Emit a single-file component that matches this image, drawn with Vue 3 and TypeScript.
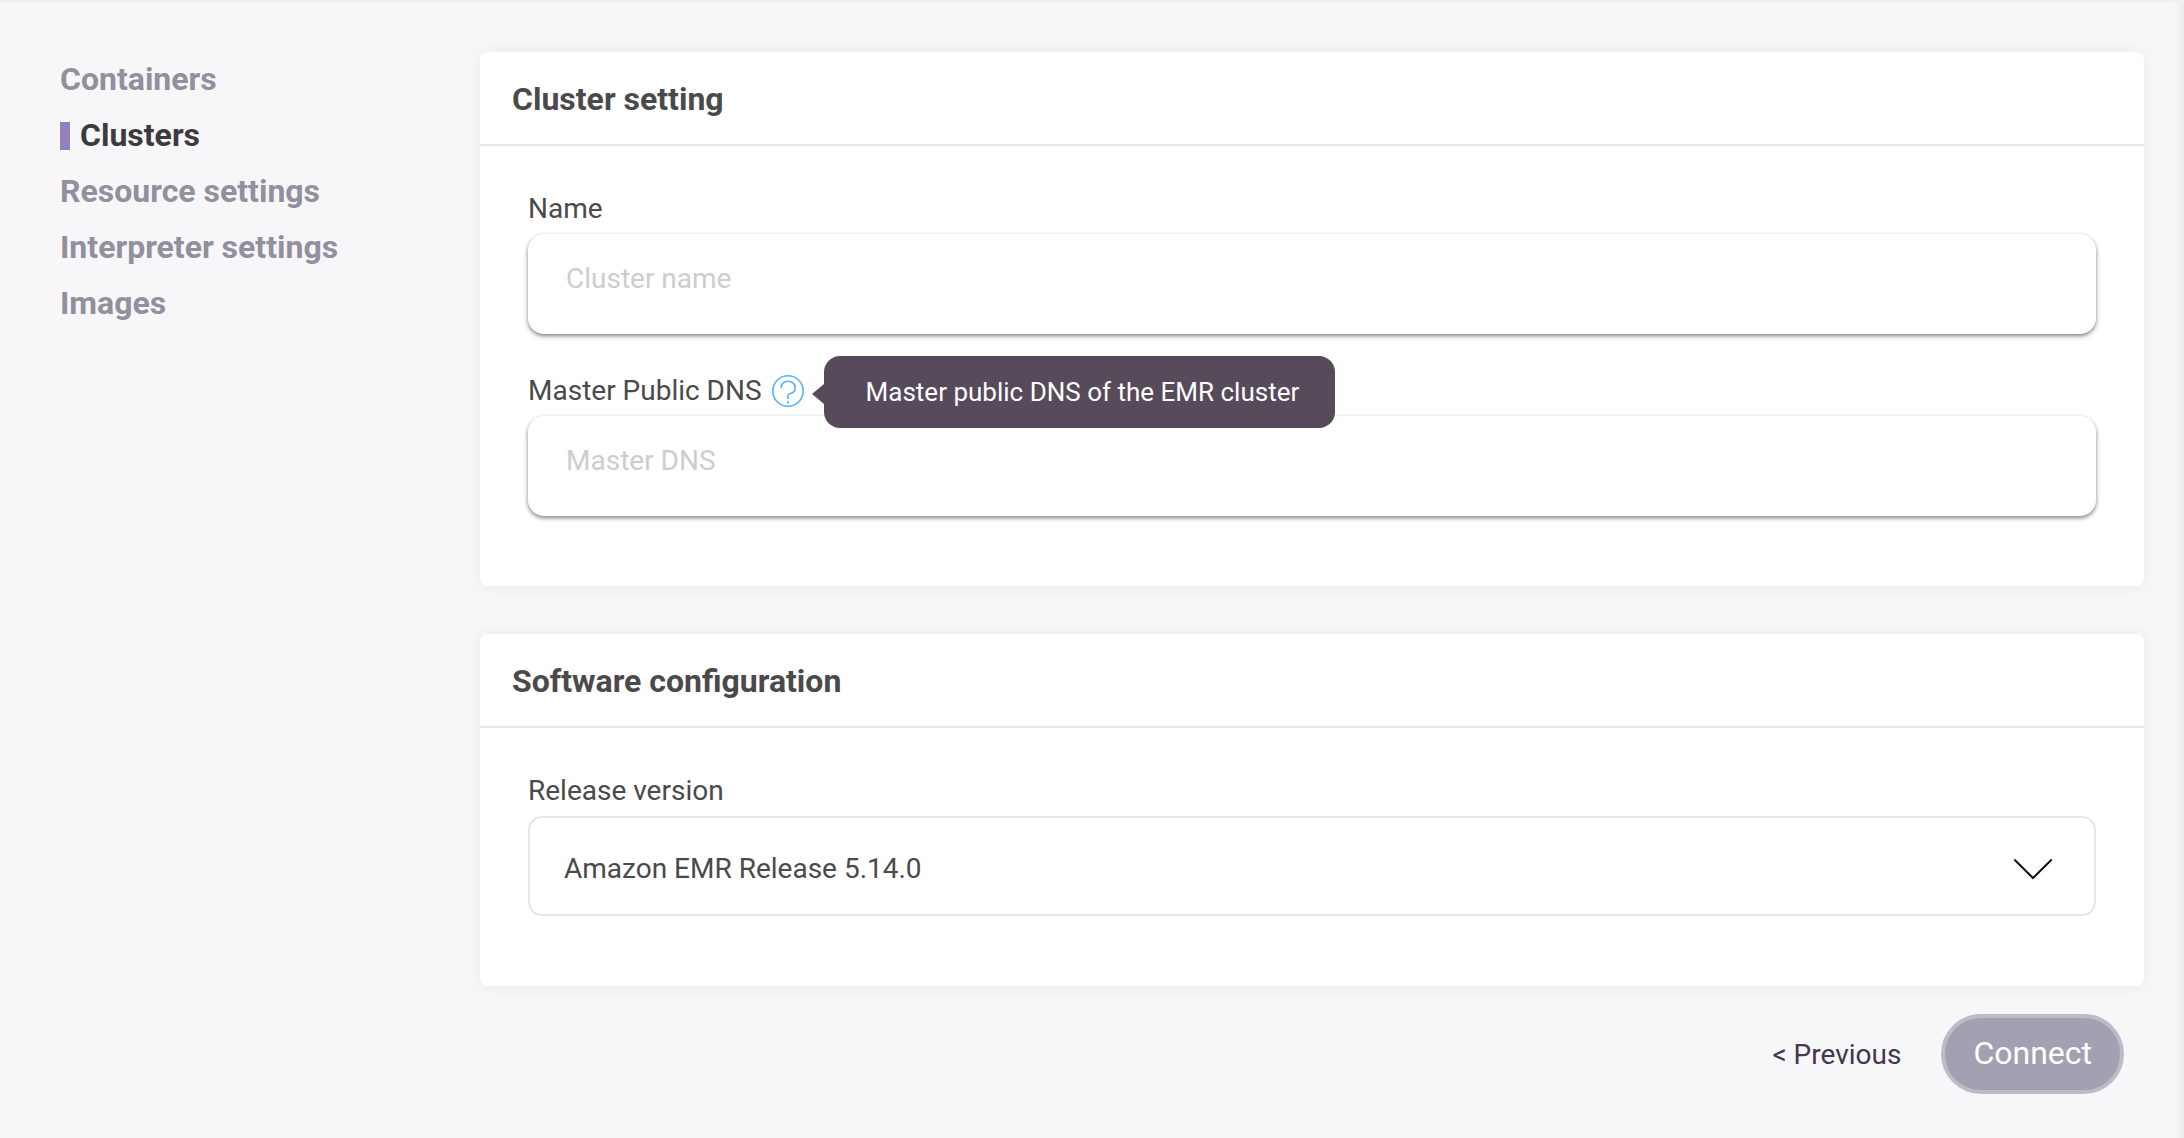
<script setup lang="ts">
import { ref } from 'vue'

interface NavItem {
  label: string
  slug: string
}

const navItems: NavItem[] = [
  { label: 'Containers', slug: 'containers' },
  { label: 'Clusters', slug: 'clusters' },
  { label: 'Resource settings', slug: 'resource-settings' },
  { label: 'Interpreter settings', slug: 'interpreter-settings' },
  { label: 'Images', slug: 'images' },
]
const activeSlug = ref('clusters')

const clusterName = ref('')
const masterDns = ref('')
const releases: string[] = ['Amazon EMR Release 5.14.0']
const release = ref(releases[0])
</script>

<template>
  <div class="page">
    <nav class="sidebar" aria-label="Settings">
      <ul class="nav-list">
        <li v-for="item in navItems" :key="item.slug">
          <a
            class="nav-link"
            :class="{ active: item.slug === activeSlug }"
            :href="'#' + item.slug"
            @click="activeSlug = item.slug"
          >{{ item.label }}</a>
        </li>
      </ul>
    </nav>

    <form class="content" @submit.prevent>
      <section class="card">
        <h2 class="card-title">Cluster setting</h2>
        <div class="card-body">
          <div class="field">
            <div class="label-row">
              <label for="cluster-name">Name</label>
            </div>
            <input id="cluster-name" v-model="clusterName" class="text-input" type="text" placeholder="Cluster name">
          </div>
          <div class="field">
            <div class="label-row">
              <label for="master-dns">Master Public DNS</label>
              <span class="help">
                <button class="help-button" type="button" aria-label="Help" aria-describedby="dns-tip">
                  <svg viewBox="0 0 32 32" width="32" height="32" fill="none" stroke="#58b0fa" stroke-width="1.6">
                    <circle cx="16" cy="16" r="15.2" />
                    <path d="M9.2 13.2V12.4C9.2 8.8 12.2 6.2 16 6.2S23.2 8.8 23.2 12.4C23.2 15.6 21 17.9 18.2 18.5C16.8 18.8 16 19.3 16 20.6V24" />
                    <path d="M16 25.8V28.8" />
                  </svg>
                </button>
                <span id="dns-tip" class="tooltip" role="tooltip">Master public DNS of the EMR cluster</span>
              </span>
            </div>
            <input id="master-dns" v-model="masterDns" class="text-input" type="text" placeholder="Master DNS">
          </div>
        </div>
      </section>

      <section class="card">
        <h2 class="card-title">Software configuration</h2>
        <div class="card-body">
          <div class="field">
            <div class="label-row">
              <label for="release">Release version</label>
            </div>
            <div class="select-wrap">
              <select id="release" v-model="release" class="select">
                <option v-for="name in releases" :key="name" :value="name">{{ name }}</option>
              </select>
              <svg class="chevron" viewBox="0 0 40 22" width="40" height="22" fill="none" stroke="#111" stroke-width="2" aria-hidden="true">
                <path d="M1.3 1.5L20 20L38.7 1.5" />
              </svg>
            </div>
          </div>
        </div>
      </section>

      <div class="actions">
        <button class="previous" type="button">&lt; Previous</button>
        <button class="connect" type="submit">Connect</button>
      </div>
    </form>
  </div>
</template>

<style>
body {
  margin: 0;
  background: #f7f7fa;
}
</style>

<style scoped>
.page {
  box-sizing: border-box;
  display: grid;
  grid-template-columns: 420px minmax(0, 1fr);
  min-height: 100vh;
  padding: 50px 40px 44px 60px;
  border-top: 2px solid #f0f0f3;
  background: linear-gradient(to left, #ededef, #f7f7fa 10px);
  color: #4a4a4a;
  font-family: Roboto, sans-serif;
  font-size: 28px;
  line-height: 38px;
}

.page *,
.page *::before,
.page *::after {
  box-sizing: border-box;
}

.nav-list {
  margin: 0;
  padding: 0;
  list-style: none;
}

.nav-link {
  display: flex;
  align-items: center;
  gap: 10px;
  padding-bottom: 2px;
  color: #91909c;
  font-size: 32px;
  font-weight: 700;
  line-height: 54px;
  text-decoration: none;
}

.nav-link.active {
  color: #3b3b3d;
}

.nav-link.active::before {
  width: 10px;
  height: 28px;
  margin-top: 2px;
  background: #9580bb;
  content: '';
}

.content {
  display: flex;
  flex-direction: column;
}

.card {
  margin-bottom: 48px;
  border-radius: 8px;
  background: #fff;
  box-shadow: 0 0 16px rgba(0, 0, 0, 0.06);
}

.card:last-of-type {
  margin-bottom: 28px;
}

.card-title {
  margin: 0;
  padding: 2px 32px 0;
  border-bottom: 2px solid #e7e6ed;
  font-size: 32px;
  font-weight: 700;
  line-height: 90px;
}

.card-body {
  display: flex;
  flex-direction: column;
  gap: 38px;
  padding: 44px 48px 70px;
}

.field {
  display: flex;
  flex-direction: column;
  gap: 6px;
}

.label-row {
  display: flex;
  align-items: center;
  gap: 10px;
}

.help {
  position: relative;
  display: flex;
}

.help-button {
  display: flex;
  padding: 0;
  border: 0;
  background: none;
}

.tooltip {
  position: absolute;
  top: -19px;
  left: 52px;
  padding: 0 36px 0 42px;
  border-radius: 16px;
  background: #574a5b;
  color: #fff;
  font-size: 26px;
  line-height: 72px;
  white-space: nowrap;
}

.tooltip::before {
  position: absolute;
  top: 28px;
  right: 100%;
  border: solid transparent;
  border-width: 10px 12px 10px 0;
  border-right-color: #574a5b;
  content: '';
}

.text-input {
  width: 100%;
  height: 100px;
  padding: 0 38px 12px;
  border: 0;
  border-radius: 16px;
  background: #fff;
  box-shadow: 0 2px 4px rgba(0, 0, 0, 0.5);
  color: #4a4a4a;
  font: inherit;
}

.text-input::placeholder {
  color: #cdcdcd;
  opacity: 1;
}

.select-wrap {
  position: relative;
}

.select {
  display: block;
  width: 100%;
  height: 100px;
  padding: 6px 100px 0 34px;
  border: 2px solid #e6e6e6;
  border-radius: 14px;
  appearance: none;
  background: #fff;
  color: #4a4a4a;
  font: inherit;
}

.chevron {
  position: absolute;
  top: 42px;
  right: 43px;
  pointer-events: none;
}

.actions {
  display: flex;
  align-items: center;
  justify-content: flex-end;
  gap: 40px;
  padding-right: 20px;
}

.previous {
  padding: 2px 0 0;
  border: 0;
  background: none;
  color: #46354e;
  font: inherit;
}

.connect {
  height: 80px;
  padding: 0 28px 2px;
  border: 4px solid #bdbbc8;
  border-radius: 40px;
  background: #a3a1b1;
  color: #fff;
  font-family: inherit;
  font-size: 32px;
}
</style>
